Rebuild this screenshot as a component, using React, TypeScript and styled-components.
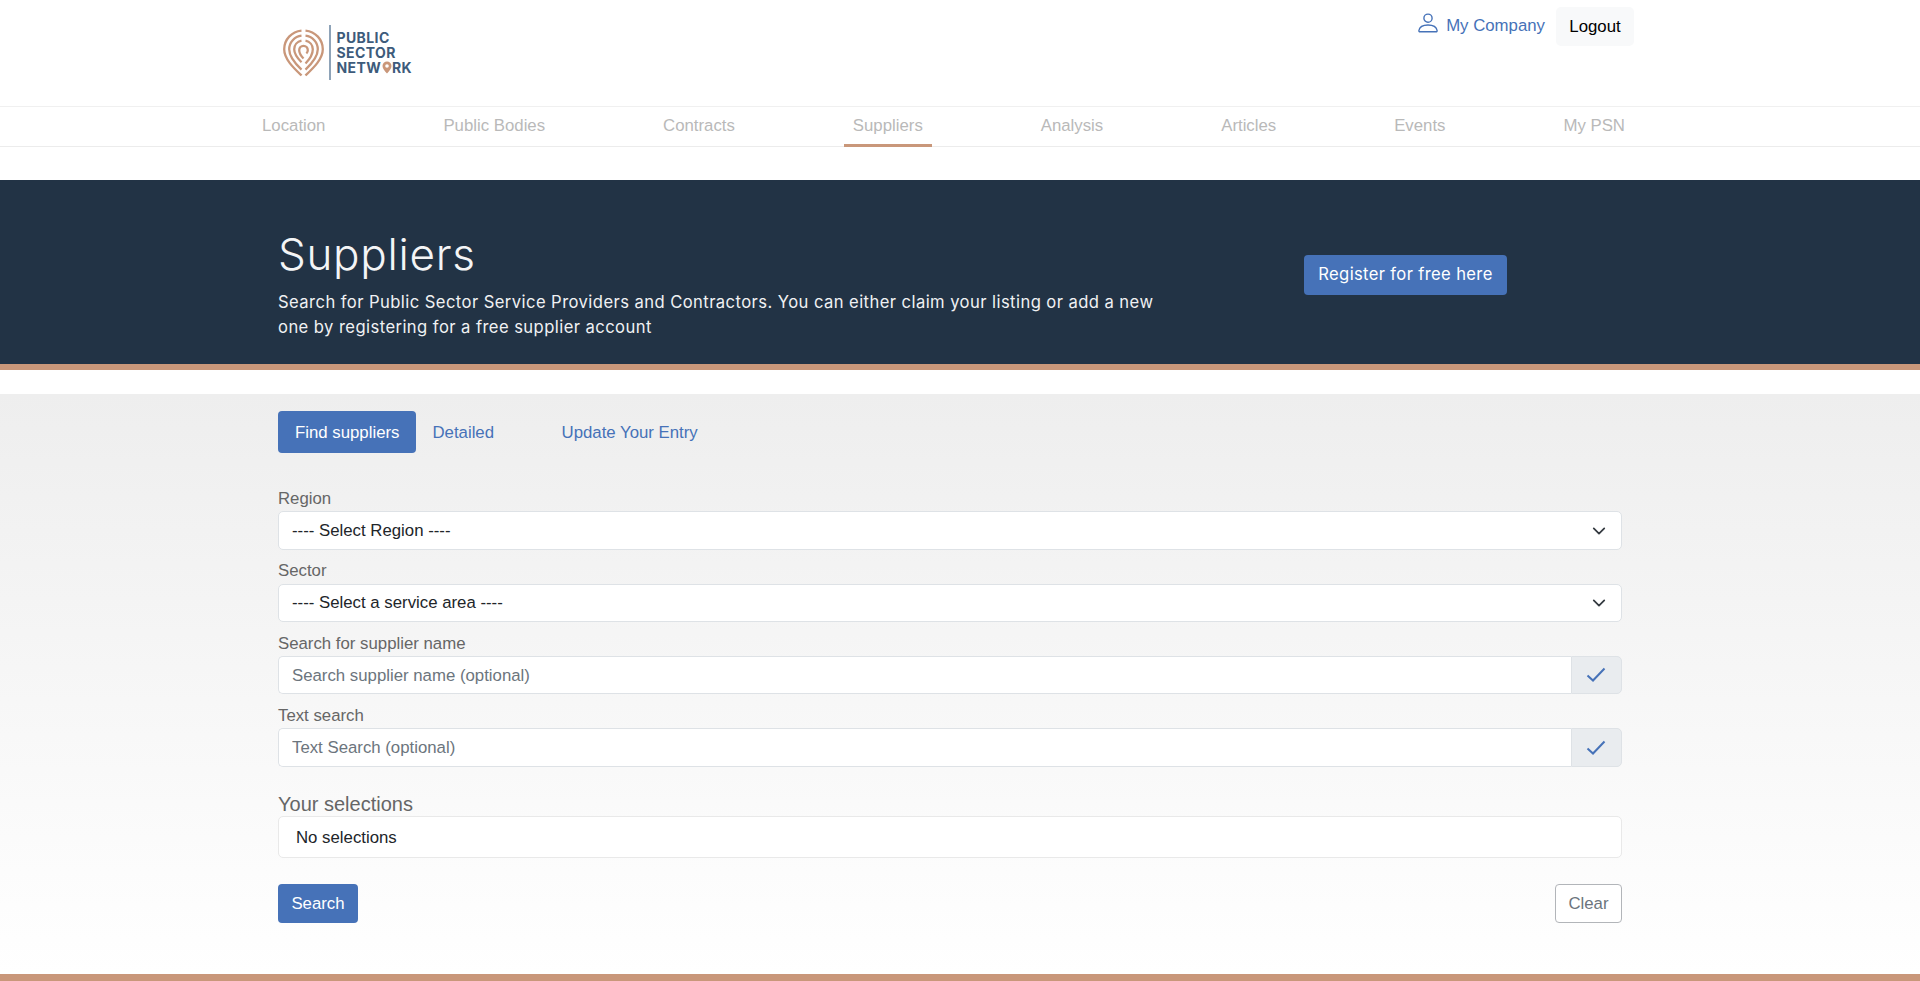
import React from "react";
import styled, { createGlobalStyle } from "styled-components";

const Global = createGlobalStyle`
  html, body { margin: 0; padding: 0; background: #fff; overflow: hidden; }
  body { font-family: "Liberation Sans", Arial, sans-serif; font-size: 16.8px; line-height: 1.5; color: #212529; }
  * { box-sizing: border-box; }
`;

const BLUE = "#4672b8";
const COPPER = "#c9977a";

const Page = styled.div`display: flex; flex-direction: column; height: 981px;`;
const Header = styled.header`display: flex; justify-content: space-between; height: 106px; padding: 0 286px 0 283px; flex: none;`;
const Logo = styled.a`display: flex; align-items: center; height: 55px; margin-top: 25px;`;
const LogoRule = styled.span`width: 1.5px; height: 55px; background: #8ea3b8; margin: 0 6px 0 5px;`;
const LogoText = styled.span`display: flex; flex-direction: column; font-family: Inter, sans-serif; font-weight: 700; font-size: 14px; line-height: 15px; color: #3d5b7b; letter-spacing: 0.4px; margin-top: 0;`;
const PinLetter = styled.span`position: relative; color: transparent;`;
const PinMark = styled.svg`position: absolute; left: 1px; top: 2px; width: 10px; height: 13px;`;
const UserArea = styled.div`display: flex; align-items: flex-start; padding-top: 7px;`;
const CompanyLink = styled.a`display: flex; align-items: center; gap: 8px; color: ${BLUE}; height: 28px; margin-top: 5px; margin-right: 11px;`;
const UserIcon = styled.svg`width: 20px; height: 20px; margin-top: -6px;`;
const LogoutButton = styled.button`width: 78px; height: 39px; background: #f8f9fa; border: 0; border-radius: 5px; font: inherit; color: #000; padding: 0;`;

const Nav = styled.nav`display: flex; justify-content: space-between; height: 41px; padding: 0 286px 0 253px; border-top: 1px solid #f0f0f0; border-bottom: 1px solid #ececec; flex: none;`;
const NavItem = styled.a<{ $active?: boolean }>`
  padding: 0 9px; height: 40px; line-height: 38px; color: #b9b9b9;
  border-bottom: 3px solid ${(p) => (p.$active ? COPPER : "transparent")};
`;

const Hero = styled.section`
  display: flex; flex: none; height: 190px; margin-top: 33px; padding: 48px 0 0 278px;
  background: #223345; border-bottom: 6px solid ${COPPER}; color: #fff;
`;
const HeroText = styled.div`width: 930px; font-family: Inter, sans-serif;`;
const HeroTitle = styled.h1`margin: 0; font-size: 44px; font-weight: 300; line-height: 52px; letter-spacing: 0.7px; color: #f4f5f6;`;
const HeroCopy = styled.p`margin: 9.5px 0 0; font-size: 16.6px; line-height: 25px; width: 890px; color: #f0f1f3; letter-spacing: 0.43px;`;
const RegisterButton = styled.a`
  display: block; width: 203px; height: 40px; margin: 27px 0 0 96px; border-radius: 4px; text-align: center;
  background: ${BLUE}; color: #fff; font-family: Inter, sans-serif; font-size: 16.6px; letter-spacing: 0.35px; line-height: 39px;
`;

const Main = styled.main`flex: 1; margin-top: 24px; padding: 17px 298px 0 278px; background: linear-gradient(#eeeeee, #ffffff);`;
const Tabs = styled.div`display: flex; height: 42px; margin-bottom: 33px;`;
const Tab = styled.a<{ $active?: boolean; $gap?: boolean }>`
  padding: ${(p) => (p.$active ? "0 17px" : "0 17px 0 16px")}; line-height: 44px; border-radius: 4px;
  color: ${(p) => (p.$active ? "#fff" : BLUE)};
  background: ${(p) => (p.$active ? BLUE : "transparent")};
  margin-left: ${(p) => (p.$gap ? "34.5px" : "0")};
`;
const Field = styled.div`margin-bottom: 8.7px;`;
const Label = styled.label`display: block; color: #666; line-height: 25.2px;`;
const SelectWrap = styled.div`position: relative; height: 38.5px;`;
const Select = styled.select`
  appearance: none; display: block; width: 100%; height: 100%; padding: 0 13px; font: inherit; color: #212529;
  background: #fff; border: 1px solid #dee2e6; border-radius: 5px; outline: 0;
`;
const Chevron = styled.svg`position: absolute; right: 15.700px; top: 12.300px; width: 14px; height: 14px; pointer-events: none;`;
const InputGroup = styled.div`display: flex; height: 38.5px;`;
const Input = styled.input`
  flex: 1; min-width: 0; padding: 0 13px; font: inherit; background: #fff; border: 1px solid #dee2e6; border-right: 0;
  border-radius: 5px 0 0 5px; outline: 0;
  &::placeholder { color: #6c757d; opacity: 1; }
`;
const Addon = styled.span`
  display: flex; align-items: center; justify-content: center; width: 51px; background: #e9ecef;
  border: 1px solid #dee2e6; border-radius: 0 5px 5px 0; padding-right: 1px;
`;
const Check = styled.svg`width: 20px; height: 16px;`;
const SelectionTitle = styled.div`margin-top: 25.2px; font-size: 20px; line-height: 24px; color: #666;`;
const SelectionBox = styled.div`height: 42.4px; padding: 0 17px; line-height: 41px; background: #fff; border: 1px solid #e9e9e9; border-radius: 5px; color: #212529;`;
const Actions = styled.div`display: flex; justify-content: space-between; margin-top: 25.500px;`;
const SearchButton = styled.button`width: 80px; height: 38.7px; padding: 0; background: ${BLUE}; border: 0; border-radius: 4px; color: #fff; font: inherit;`;
const ClearButton = styled.button`width: 67px; height: 38.7px; padding: 0; background: #fff; border: 1px solid #b2b5b9; border-radius: 4px; color: #6c757d; font: inherit;`;
const FooterBar = styled.div`height: 7px; flex: none; background: ${COPPER};`;

const Mark = styled.svg`width: 41px; height: 48px; margin-top: 1px;`;
const LogoMark = () => (
  <Mark viewBox="0 0 41 48" fill="none" stroke={COPPER} strokeWidth="2.3" strokeLinecap="butt">
    <path d="M18.5 1.6C8.6 2.5 1.2 10.6 1.2 20.3c0 9.8 9.3 18.5 17.3 26.2" />
    <path d="M22.5 1.6C32.4 2.5 39.8 10.6 39.8 20.3c0 9.8-9.3 18.5-17.3 26.2" />
    <path d="M18.5 40.6C12 34.5 6.2 27.5 6.2 20.3 6.200 13.400 11.500 7.500 18.500 6.700" />
    <path d="M22.5 6.700C29.500 7.500 34.800 13.400 34.800 20.300c0 7.200-5.800 14.200-12.300 20.300" />
    <path d="M18.500 11.700C14.200 12.500 11.200 16.100 11.200 20.300c0 5 3.800 9.500 7.300 13" />
    <path d="M22.500 34.500C26.500 30.500 29.800 25.700 29.800 20.300 29.800 16.100 26.800 12.500 22.500 11.700" />
    <path d="M20.500 29.500C18.400 27.300 16.200 24.300 16.200 21.300c0-2.500 1.900-4.500 4.300-4.500s4.300 2 4.300 4.500c0 1.400-.6 2.400-1.400 3.200" />
  </Mark>
);

const NAV = ["Location", "Public Bodies", "Contracts", "Suppliers", "Analysis", "Articles", "Events", "My PSN"];

const ChevronIcon = () => (
  <Chevron viewBox="0 0 16 16" fill="none" stroke="#343a40" strokeWidth="2" strokeLinecap="round" strokeLinejoin="round">
    <path d="M2 5l6 6 6-6" />
  </Chevron>
);
const CheckIcon = () => (
  <Check viewBox="0 0 20 16" fill="none" stroke={BLUE} strokeWidth="2">
    <path d="M1.500 8.500l5.500 5L18.500 1.500" />
  </Check>
);

export default function App() {
  return (
    <Page>
      <Global />
      <Header>
        <Logo>
          <LogoMark />
          <LogoRule />
          <LogoText>
            <span>PUBLIC</span>
            <span>SECTOR</span>
            <span>
              NETW
              <PinLetter>
                O
                <PinMark viewBox="0 0 10 13">
                  <path d="M5 12.500C2.800 10 .5 7.700.5 5a4.500 4.500 0 0 1 9 0c0 2.700-2.300 5-4.500 7.500z" fill={COPPER} />
                  <circle cx="5" cy="5" r="1.800" fill="#fff" />
                </PinMark>
              </PinLetter>
              RK
            </span>
          </LogoText>
        </Logo>
        <UserArea>
          <CompanyLink>
            <UserIcon viewBox="0 0 20 20" fill="none" stroke={BLUE} strokeWidth="1.400">
              <circle cx="10" cy="5.200" r="4.100" />
              <path d="M2 18.800c-.8 0-1.200-.5-1.100-1.300C1.400 14.600 4.400 12 10 12s8.600 2.600 9.100 5.500c.1.800-.3 1.300-1.100 1.300z" />
            </UserIcon>
            My Company
          </CompanyLink>
          <LogoutButton>Logout</LogoutButton>
        </UserArea>
      </Header>
      <Nav>
        {NAV.map((n) => (
          <NavItem key={n} $active={n === "Suppliers"}>{n}</NavItem>
        ))}
      </Nav>
      <Hero>
        <HeroText>
          <HeroTitle>Suppliers</HeroTitle>
          <HeroCopy>
            Search for Public Sector Service Providers and Contractors. You can either claim your listing or add a new one by registering for a free supplier account
          </HeroCopy>
        </HeroText>
        <RegisterButton>Register for free here</RegisterButton>
      </Hero>
      <Main>
        <Tabs>
          <Tab $active>Find suppliers</Tab>
          <Tab>Detailed</Tab>
          <Tab $gap>Update Your Entry</Tab>
        </Tabs>
        <Field>
          <Label>Region</Label>
          <SelectWrap>
            <Select defaultValue="r"><option value="r">---- Select Region ----</option></Select>
            <ChevronIcon />
          </SelectWrap>
        </Field>
        <Field>
          <Label>Sector</Label>
          <SelectWrap>
            <Select defaultValue="s"><option value="s">---- Select a service area ----</option></Select>
            <ChevronIcon />
          </SelectWrap>
        </Field>
        <Field>
          <Label>Search for supplier name</Label>
          <InputGroup>
            <Input placeholder="Search supplier name (optional)" />
            <Addon><CheckIcon /></Addon>
          </InputGroup>
        </Field>
        <Field>
          <Label>Text search</Label>
          <InputGroup>
            <Input placeholder="Text Search (optional)" />
            <Addon><CheckIcon /></Addon>
          </InputGroup>
        </Field>
        <SelectionTitle>Your selections</SelectionTitle>
        <SelectionBox>No selections</SelectionBox>
        <Actions>
          <SearchButton>Search</SearchButton>
          <ClearButton>Clear</ClearButton>
        </Actions>
      </Main>
      <FooterBar />
    </Page>
  );
}
